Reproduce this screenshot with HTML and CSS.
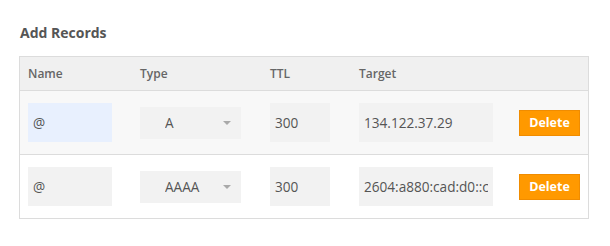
FILE: index.html
```html
<!DOCTYPE html>
<html>
<head>
<meta charset="utf-8">
<link rel="stylesheet" href="styles.css">
</head>
<body>
<div class="page">
  <h2 class="title">Add Records</h2>
  <div class="records">
    <div class="row head">
      <div>Name</div>
      <div>Type</div>
      <div>TTL</div>
      <div>Target</div>
      <div></div>
    </div>
    <div class="row odd">
      <input class="field name autofill" value="@">
      <div class="select-wrap"><select class="select"><option>A</option></select><span class="caret"></span></div>
      <input class="field ttl" value="300">
      <input class="field target" value="134.122.37.29">
      <button class="delete">Delete</button>
    </div>
    <div class="row">
      <input class="field name" value="@">
      <div class="select-wrap"><select class="select"><option>AAAA</option></select><span class="caret"></span></div>
      <input class="field ttl" value="300">
      <input class="field target" value="2604:a880:cad:d0::c5:b001">
      <button class="delete">Delete</button>
    </div>
  </div>
</div>
</body>
</html>
```

FILE: styles.css
```css
* { box-sizing: border-box; }
body {
  margin: 0;
  background: #fff;
  font-family: "Open Sans", "Liberation Sans", sans-serif;
  color: #555;
}
.page {
  padding: 23px 21px 0 19px;
}
.title {
  margin: 0 0 13px 1px;
  font-size: 14px;
  line-height: 20px;
  font-weight: 700;
  color: #555;
}
.records {
  border: 1px solid #dcdcdc;
  width: 570px;
}
.row {
  display: grid;
  grid-template-columns: 112px 130px 89px 160px 61px;
  padding-left: 8px;
  align-items: center;
  height: 64px;
  border-bottom: 1px solid #dcdcdc;
  background: #fff;
}
.row:last-child { border-bottom: none; height: 63px; }
.row.head {
  height: 34px;
  background: #f0f0f0;
  font-size: 12px;
  font-weight: 600;
  color: #666;
}
.row.odd { background: #f8f8f8; }
.field {
  height: 39px;
  border: none;
  background: #f2f2f2;
  padding: 0 5px 0 5px;
  font-family: inherit;
  font-size: 13.6px;
  color: #555;
  outline: none;
}
.field.name { width: 84px; }
.field.autofill { background: #e8f0fe; }
.field.ttl { width: 60px; }
.field.target { width: 134px; }
.select-wrap {
  position: relative;
  width: 101px;
  height: 32px;
}
.select {
  appearance: none;
  -webkit-appearance: none;
  width: 100%;
  height: 100%;
  border: none;
  background: #f2f2f2;
  padding: 0 0 0 25px;
  font-family: inherit;
  font-size: 13.6px;
  color: #555;
  outline: none;
}
.caret {
  position: absolute;
  right: 10px;
  top: 14px;
  width: 0;
  height: 0;
  border-left: 4px solid transparent;
  border-right: 4px solid transparent;
  border-top: 4px solid #a9a9a9;
}
.delete {
  width: 61px;
  height: 26px;
  background: #ff9900;
  border: 1px solid #f08c00;
  color: #fff;
  font-family: inherit;
  font-size: 12.5px;
  font-weight: 700;
  padding: 0;
}
```
